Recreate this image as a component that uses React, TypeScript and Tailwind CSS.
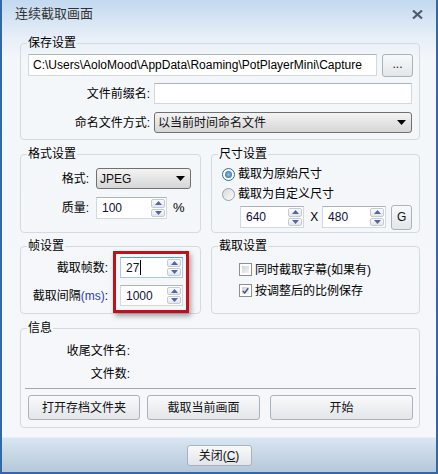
import React from 'react';

const Arrow = ({ up }: { up?: boolean }) => (
  <svg width="7" height="4" viewBox="0 0 7 4">
    <path d={up ? 'M0 4 L3.5 0 L7 4 Z' : 'M0 0 L3.5 4 L7 0 Z'} fill="#5366a0" />
  </svg>
);

interface SpinProps {
  value: string;
  className: string;
  focus?: boolean;
}

const SpinInput = ({ value, className, focus }: SpinProps) => (
  <div
    className={
      focus
        ? `flex bg-white border border-[#a9c9ea] border-t-[#5a9ad6] ${className}`
        : `flex bg-white border border-[#d3d8de] border-t-[#adb3bb] ${className}`
    }
  >
    <div className="flex-1 flex items-center pl-[5px] text-[#10103a]">
      {value}
      {focus && <span className="w-px h-[15px] bg-black ml-px" />}
    </div>
    <div className="w-[16px] flex flex-col gap-px p-px">
      <div className="flex-1 flex items-center justify-center border border-[#c3cbd5] rounded-[2px] bg-linear-to-b from-[#fbfcfd] to-[#e2e7ed]">
        <Arrow up />
      </div>
      <div className="flex-1 flex items-center justify-center border border-[#c3cbd5] rounded-[2px] bg-linear-to-b from-[#fbfcfd] to-[#e2e7ed]">
        <Arrow />
      </div>
    </div>
  </div>
);

const Select = ({ value, className }: { value: string; className: string }) => (
  <div
    className={`flex items-center border border-[#707070] rounded-[3px] bg-linear-to-b from-[#f4f4f4] to-[#d6d6d6] pl-[3px] pr-[5px] ${className}`}
  >
    <span className="flex-1 text-[#111]">{value}</span>
    <svg width="9" height="5" viewBox="0 0 9 5">
      <path d="M0 0 H9 L4.5 5 Z" fill="#000" />
    </svg>
  </div>
);

const Btn = ({ children, className }: { children: React.ReactNode; className: string }) => (
  <button
    type="button"
    className={`flex items-center justify-center border border-[#a9b2bd] rounded-[3px] bg-linear-to-b from-[#f8f9fa] to-[#e3e6ea] text-[#111] ${className}`}
  >
    {children}
  </button>
);

const Group = ({ title, className, children }: { title: string; className: string; children: React.ReactNode }) => (
  <fieldset className={`border border-[#d3dae2] rounded-[4px] px-[7px] min-w-0 ${className}`}>
    <legend className="-ml-px px-px text-[12px] leading-[14px]">{title}</legend>
    {children}
  </fieldset>
);

const Radio = ({ on }: { on?: boolean }) =>
  on ? (
    <div className="w-[13px] h-[13px] rounded-full border border-[#2f6a9c] bg-white flex items-center justify-center">
      <div className="w-[7px] h-[7px] rounded-full bg-radial from-[#8cc8f0] to-[#1d5c9a]" />
    </div>
  ) : (
    <div className="w-[13px] h-[13px] rounded-full border border-[#9aa0a6] bg-linear-to-br from-[#d8dadc] to-[#fbfbfb]" />
  );

const Check = ({ on }: { on?: boolean }) => (
  <div className="w-[13px] h-[13px] border border-[#8e8f8f] bg-white p-[2px]">
    <div className="w-full h-full bg-linear-to-br from-[#cfd1d3] to-[#f6f6f6] flex items-center justify-center">
      {on && (
        <svg width="9" height="8" viewBox="0 0 9 8">
          <path d="M1 4 L3.5 6.5 L8 0.5" stroke="#3a4f8f" strokeWidth="1.8" fill="none" />
        </svg>
      )}
    </div>
  </div>
);

export default function App() {
  return (
    <div className="w-[438px] h-[474px] flex flex-col border-x-2 border-b-2 border-[#3468a3] bg-[linear-gradient(to_bottom,#c2d9ef_0px,#e6eef7_36px,#f4f7fa_60px,#f5f7fa_100%)] text-[12px] leading-[16px] text-black font-['Liberation_Sans','Noto_Sans_CJK_SC',sans-serif]">
      {/* title bar */}
      <div className="h-[36px] flex items-start justify-between pl-[13px] pr-[13px] pt-[5px]">
        <span className="text-[13px] leading-[18px] text-[#333]">连续截取画面</span>
        <svg width="11" height="9" viewBox="0 0 11 9" className="mt-[5px]">
          <path d="M1 0.5 L10 8.5 M10 0.5 L1 8.5" stroke="#4e5c72" strokeWidth="2.2" />
        </svg>
      </div>

      <div className="flex flex-col pl-[18px] pr-[16px]">
        <Group title="保存设置" className="pt-[4px] pb-[6px] pr-[6px]">
          <div className="flex gap-[5px]">
            <div className="flex-1 h-[22px] flex items-center pl-[4px] bg-white border border-[#d3d8de] border-t-[#adb3bb]">
              C:\Users\AoloMood\AppData\Roaming\PotPlayerMini\Capture
            </div>
            <Btn className="w-[31px] h-[23px] pb-[3px]">...</Btn>
          </div>
          <div className="flex mt-[6px] items-center mr-px">
            <span className="w-[122px] text-right">文件前缀名:</span>
            <div className="flex-1 ml-[4px] h-[21px] bg-white border border-[#d3d8de] border-t-[#adb3bb]" />
          </div>
          <div className="flex mt-[8px] items-center mr-px">
            <span className="w-[122px] text-right">命名文件方式:</span>
            <Select value="以当前时间命名文件" className="flex-1 ml-[4px] h-[21px]" />
          </div>
        </Group>

        <div className="flex gap-[10px] mt-[7px]">
          <Group title="格式设置" className="w-[181px] pt-[7px] pb-[13px]">
            <div className="flex items-center">
              <span className="w-[61px] text-right">格式:</span>
              <Select value="JPEG" className="ml-[7px] w-[95px] h-[21px]" />
            </div>
            <div className="flex items-center mt-[8px]">
              <span className="w-[61px] text-right">质量:</span>
              <SpinInput value="100" className="ml-[7px] w-[71px] h-[22px]" />
              <span className="ml-[6px] text-[13px]">%</span>
            </div>
          </Group>
          <Group title="尺寸设置" className="flex-1 pt-[3px]">
            <div className="flex items-center h-[20px] pl-[3px] gap-[3px]">
              <Radio on />
              <span>截取为原始尺寸</span>
            </div>
            <div className="flex items-center h-[20px] pl-[3px] gap-[3px]">
              <Radio />
              <span>截取为自定义尺寸</span>
            </div>
            <div className="flex items-center h-[22px] mt-[2px] pl-[21px]">
              <SpinInput value="640" className="w-[65px] h-[22px]" />
              <span className="ml-[6px] w-[12px]">X</span>
              <SpinInput value="480" className="w-[65px] h-[22px]" />
              <Btn className="ml-[5px] w-[21px] h-[25px]">G</Btn>
            </div>
          </Group>
        </div>

        <div className="flex gap-[10px] mt-[6px]">
          <Group title="帧设置" className="w-[181px] pt-[4px] pb-[7px]">
            <div className="flex">
              <div className="w-[80px] flex flex-col items-end">
                <span className="h-[21px] flex items-center">截取帧数:</span>
                <span className="h-[21px] mt-[7px] flex items-center">
                  截取间隔<span className="text-[#2b3fb0]">(ms)</span>:
                </span>
              </div>
              <div className="relative ml-[12px] flex flex-col">
                <SpinInput value="27" focus className="w-[63px] h-[21px]" />
                <SpinInput value="1000" className="w-[63px] h-[21px] mt-[7px]" />
                <div className="absolute left-[-7px] top-[-6px] w-[76px] h-[62px] border-[3px] border-[#c0111b] shadow-[2px_3px_5px_rgba(0,0,0,0.35)]" />
              </div>
            </div>
          </Group>
          <Group title="截取设置" className="flex-1 pt-[6px]">
            <div className="flex items-center h-[21px] pl-[20px] gap-[3px]">
              <Check />
              <span>同时截取字幕(如果有)</span>
            </div>
            <div className="flex items-center h-[21px] pl-[20px] gap-[3px]">
              <Check on />
              <span>按调整后的比例保存</span>
            </div>
          </Group>
        </div>

        <Group title="信息" className="mt-[7px] pt-[4px] pb-[7px] pr-[6px]">
          <div className="h-[23px] flex items-center">
            <span className="w-[102px] text-right">收尾文件名:</span>
          </div>
          <div className="h-[23px] flex items-center">
            <span className="w-[102px] text-right">文件数:</span>
          </div>
          <div className="mt-[3px] -mx-[3px] h-px bg-[#a3a8ae]" />
          <div className="flex mt-[6px]">
            <Btn className="w-[112px] h-[25px]">打开存档文件夹</Btn>
            <Btn className="ml-[7px] w-[113px] h-[25px]">截取当前画面</Btn>
            <Btn className="ml-[10px] flex-1 h-[25px]">开始</Btn>
          </div>
        </Group>
      </div>

      {/* footer */}
      <div className="mt-auto h-[35px] flex justify-center pt-[7px] border-t border-[#e9eff6] bg-linear-to-b from-[#d9e5f2] to-[#b5c8d9]">
        <Btn className="w-[65px] h-[21px]">
          <span>
            关闭(<span className="underline">C</span>)
          </span>
        </Btn>
      </div>
    </div>
  );
}
